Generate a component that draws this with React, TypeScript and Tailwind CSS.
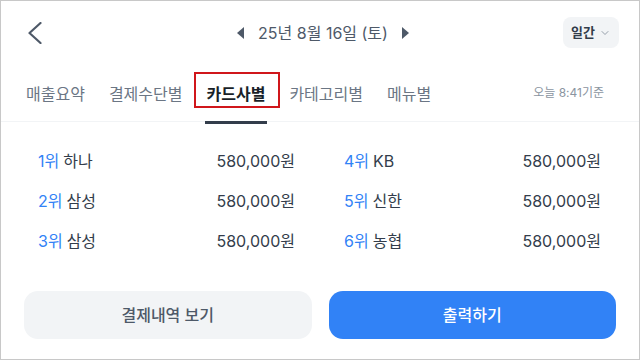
import { ChevronDown } from "lucide-react";

const cards = [
  { rank: 1, name: "하나", amount: "580,000원" },
  { rank: 2, name: "삼성", amount: "580,000원" },
  { rank: 3, name: "삼성", amount: "580,000원" },
  { rank: 4, name: "KB", amount: "580,000원" },
  { rank: 5, name: "신한", amount: "580,000원" },
  { rank: 6, name: "농협", amount: "580,000원" },
];

const tabs = ["매출요약", "결제수단별", "카드사별", "카테고리별", "메뉴별"];

function CardRow({ item }: { item: (typeof cards)[0] }) {
  return (
    <div className="h-10 flex items-center justify-between text-[16px]">
      <div className="flex items-center gap-1">
        <span className="text-[#3182f6]">{item.rank}위</span>
        <span className="text-[#333d4b]">{item.name}</span>
      </div>
      <span className="text-[#333d4b]">{item.amount}</span>
    </div>
  );
}

export default function App() {
  return (
    <div
      className="w-[640px] h-[360px] border border-[#c8c8c8] bg-white flex flex-col overflow-hidden"
      style={{ fontFamily: 'Inter, "Noto Sans CJK KR", "Noto Sans", sans-serif' }}
    >
      {/* 상단 헤더 */}
      <div className="h-[63px] grid grid-cols-[1fr_auto_1fr] items-center pl-[27px] pr-[20px]">
        <svg width="14" height="22" viewBox="0 0 14 22" fill="none">
          <polyline
            points="12.5,1 1.5,11 12.5,21"
            stroke="#4e5968"
            strokeWidth="2.2"
            strokeLinecap="round"
            strokeLinejoin="round"
          />
        </svg>
        <div className="flex items-center gap-[14px] text-[16px] text-[#4e5968] ml-[-1px]">
          <svg width="7" height="12" viewBox="0 0 7 12">
            <polygon points="7,0 0,6 7,12" fill="#4e5968" />
          </svg>
          <span>25년 8월 16일 (토)</span>
          <svg width="7" height="12" viewBox="0 0 7 12">
            <polygon points="0,0 7,6 0,12" fill="#4e5968" />
          </svg>
        </div>
        <button className="justify-self-end h-[31px] w-[56px] rounded-lg bg-[#f2f4f6] flex items-center justify-center gap-[4px]">
          <span className="text-[13px] font-semibold text-[#333d4b]">일간</span>
          <ChevronDown size={12} color="#8b95a1" strokeWidth={1.8} />
        </button>
      </div>

      {/* 탭 */}
      <div className="h-[58px] border-b border-[#f2f4f6] flex items-center pl-[25px] pr-[35px]">
        <div className="flex items-center gap-[24px] pt-[2px]">
          {tabs.map((t) => {
            const active = t === "카드사별";
            return (
              <div key={t} className="relative h-[58px] flex items-center">
                <span
                  className={
                    active
                      ? "text-[16px] font-bold text-[#191f28]"
                      : "text-[16px] text-[#6b7684]"
                  }
                >
                  {t}
                </span>
                {active && (
                  <>
                    <span className="absolute left-[-13px] right-[-15px] top-[7px] h-[36px] border-2 border-[#d0161b]" />
                    <span className="absolute left-[-2px] right-[-2px] bottom-[-1px] h-[3px] bg-[#333d4b]" />
                  </>
                )}
              </div>
            );
          })}
        </div>
        <span className="ml-auto text-[12px] text-[#8b95a1]">오늘 8:41기준</span>
      </div>

      {/* 카드사별 목록 */}
      <div className="grid grid-cols-2 gap-x-[49px] pl-[37px] pr-[38px] pt-[19px]">
        <div className="flex flex-col">
          {cards.slice(0, 3).map((c) => (
            <CardRow key={c.rank} item={c} />
          ))}
        </div>
        <div className="flex flex-col">
          {cards.slice(3).map((c) => (
            <CardRow key={c.rank} item={c} />
          ))}
        </div>
      </div>

      {/* 하단 버튼 */}
      <div className="flex gap-[17px] px-[23px] mt-[30px]">
        <button className="flex-1 h-[48px] rounded-[14px] bg-[#f2f4f6] text-[16px] font-medium text-[#4e5968]">
          결제내역 보기
        </button>
        <button className="flex-1 h-[48px] rounded-[14px] bg-[#3182f6] text-[16px] font-medium text-white">
          출력하기
        </button>
      </div>
    </div>
  );
}
